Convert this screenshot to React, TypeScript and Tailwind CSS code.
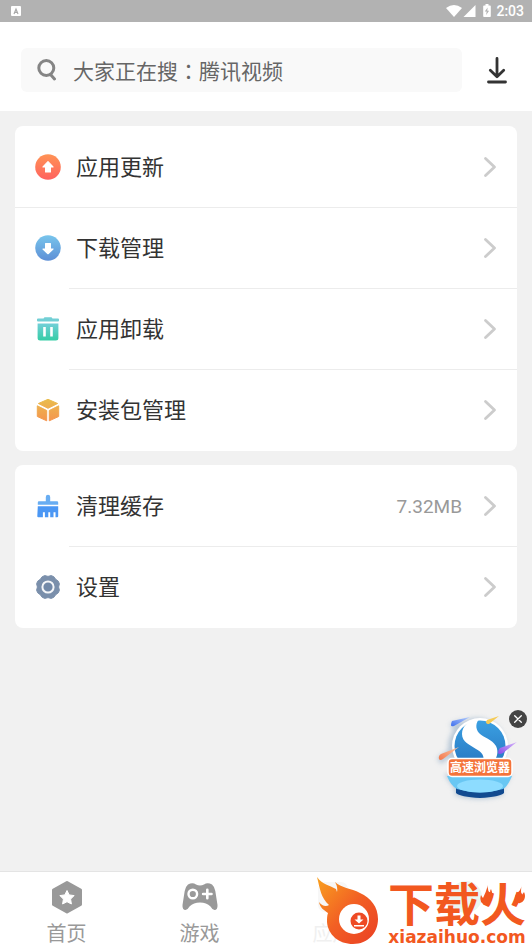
import type { ReactNode } from "react";

type Row = {
    id: string;
    label: string;
    icon: ReactNode;
    value?: string;
    fullDivider?: boolean;
};

function UpdateIcon() {
    return (
        <svg width="26" height="26" viewBox="0 0 26 26">
            <defs>
                <linearGradient id="update" x1="0" y1="0" x2="0" y2="1">
                    <stop offset="0" stopColor="#ff9355" />
                    <stop offset="1" stopColor="#ff6260" />
                </linearGradient>
            </defs>
            <circle cx="13" cy="13" r="12.8" fill="url(#update)" />
            <path
                d="M13 7.7l5 5.3h-2.600v5h-4.800v-5H8z"
                fill="#fff"
                stroke="#fff"
                strokeWidth="1.2"
                strokeLinejoin="round"
            />
        </svg>
    );
}

function DownloadIcon() {
    return (
        <svg width="26" height="26" viewBox="0 0 26 26">
            <defs>
                <linearGradient id="download" x1="0" y1="0" x2="0" y2="1">
                    <stop offset="0" stopColor="#78c5ec" />
                    <stop offset="1" stopColor="#5e8fd6" />
                </linearGradient>
            </defs>
            <circle cx="13" cy="13" r="12.8" fill="url(#download)" />
            <path
                d="M13 18.700l5-4.700h-2.600V8.500h-4.800V14H8z"
                fill="#fff"
                stroke="#fff"
                strokeWidth="1.2"
                strokeLinejoin="round"
            />
        </svg>
    );
}

function TrashIcon() {
    return (
        <svg width="26" height="26" viewBox="0 0 26 26">
            <defs>
                <linearGradient id="trash" x1="0" y1="0" x2="0" y2="1">
                    <stop offset="0" stopColor="#72cfd8" />
                    <stop offset="1" stopColor="#35cda5" />
                </linearGradient>
            </defs>
            <path
                d="M3 2.600h5.500L9.500 1.200h7l1 1.400H23q1 0 1 1v1q0 1-1 1H3q-1 0-1-1v-1q0-1 1-1z"
                fill="#72cfd5"
            />
            <path
                fillRule="evenodd"
                d="M2.600 7.500h20.800V22q0 2.500-2.500 2.500H5.100Q2.600 24.500 2.600 22zM8.200 11v9.600h2.600V11zM15.200 11v9.600h2.600V11z"
                fill="url(#trash)"
            />
        </svg>
    );
}

function PackageIcon() {
    return (
        <svg width="26" height="26" viewBox="0 0 26 26">
            <defs>
                <linearGradient
                    id="box"
                    gradientUnits="userSpaceOnUse"
                    x1="0"
                    y1="2"
                    x2="0"
                    y2="24"
                >
                    <stop offset="0" stopColor="#e9bd4e" />
                    <stop offset="1" stopColor="#f5954f" />
                </linearGradient>
            </defs>
            <g
                fill="url(#box)"
                stroke="url(#box)"
                strokeWidth="1"
                strokeLinejoin="round"
            >
                <path d="M13 2.300l9.600 4.200L13 11.300 3.400 6.500z" />
                <path d="M2.300 8.800l9.400 4.700v10.300l-9.400-4.300z" />
                <path d="M23.700 8.800l-9.400 4.700v10.300l9.400-4.300z" />
            </g>
        </svg>
    );
}

function BrushIcon() {
    return (
        <svg width="26" height="26" viewBox="0 0 26 26">
            <path
                d="M10.800 8.300V4q0-2.200 2.200-2.200T15.200 4v4.300H22q1.200 0 1.200 1.200v2.300H2.800V9.500q0-1.200 1.200-1.200z"
                fill="#68adf2"
            />
            <path
                d="M2.800 13.300h20.400v9.900q0 1-1 1h-1.700v-4.900h-2v4.900h-3.300v-4.900h-1.900v4.900H9.900v-4.900h-2v4.900H3.300q-1 0-1-1z"
                fill="#4b97f4"
            />
        </svg>
    );
}

function GearIcon() {
    return (
        <svg width="26" height="26" viewBox="0 0 26 26">
            <path
                d="M13 2.400L16.200 1.600 18.800 2.700 20.700 5.300 23.300 7.200 24.400 9.800 23.600 13 24.400 16.200 23.300 18.800 20.700 20.700 18.800 23.300 16.200 24.400 13 23.600 9.800 24.400 7.200 23.300 5.300 20.700 2.700 18.800 1.600 16.200 2.400 13 1.600 9.800 2.700 7.200 5.300 5.300 7.200 2.700 9.800 1.600z"
                fill="#7a8fab"
                stroke="#7a8fab"
                strokeWidth="1"
                strokeLinejoin="round"
            />
            <circle
                cx="13"
                cy="13"
                r="5.600"
                fill="#7289a8"
                stroke="#f4f6f9"
                strokeWidth="2"
            />
        </svg>
    );
}

const GROUPS: Row[][] = [
    [
        { id: "update", label: "应用更新", icon: <UpdateIcon />, fullDivider: true },
        { id: "download", label: "下载管理", icon: <DownloadIcon /> },
        { id: "uninstall", label: "应用卸载", icon: <TrashIcon /> },
        { id: "package", label: "安装包管理", icon: <PackageIcon /> },
    ],
    [
        { id: "cache", label: "清理缓存", icon: <BrushIcon />, value: "7.32MB" },
        { id: "settings", label: "设置", icon: <GearIcon /> },
    ],
];

function StatusBar() {
    return (
        <div className="flex h-[22px] items-center justify-between bg-[#b2b2b2] pr-2 pl-[11px]">
            <svg width="10" height="10" viewBox="0 0 10 10">
                <rect width="10" height="10" rx="1" fill="#fff" />
                <path
                    d="M3 8l2-5 2 5M3.700 6.300h2.600"
                    fill="none"
                    stroke="#aaa"
                    strokeWidth="1.200"
                />
            </svg>
            <div className="flex items-center">
                <svg width="46" height="14" viewBox="0 0 46 14" fill="#fff">
                    <path d="M0 4Q8-2 16 4L8 13z" />
                    <path d="M29.500 1v12H17.500z" />
                    <path
                        fillRule="evenodd"
                        d="M38 1.500h1.500V0h3v1.500H44q.8 0 .8.800v9.900q0 .8-.8.800h-6q-.8 0-.8-.800V2.300q0-.8.800-.800zM41.600 3.500L38.800 7.500h1.900L40.100 11l3-4.300h-1.800z"
                    />
                </svg>
                <span className="ml-1 font-[Roboto,sans-serif] text-sm leading-none font-medium text-white">
                    2:03
                </span>
            </div>
        </div>
    );
}

function SearchHeader() {
    return (
        <header className="flex items-center bg-white pt-[26px] pr-6 pb-[19px] pl-[21px]">
            <label className="flex h-11 min-w-0 flex-1 items-center rounded-md bg-[#f9f9f9] pl-4">
                <svg
                    width="20"
                    height="22"
                    viewBox="0 0 20 22"
                    fill="none"
                    stroke="#858585"
                    strokeWidth="3"
                    strokeLinecap="round"
                >
                    <circle cx="9.300" cy="9" r="7.500" />
                    <path d="M13.500 15.500l4 4.500" />
                </svg>
                <input
                    type="text"
                    aria-label="搜索"
                    placeholder="大家正在搜：腾讯视频"
                    className="ml-4 h-full min-w-0 flex-1 bg-transparent font-['Noto_Sans_CJK_TC',sans-serif] text-[21px] outline-none placeholder:text-[#666]"
                />
            </label>
            <button type="button" aria-label="下载" className="ml-6">
                <svg
                    width="22"
                    height="28"
                    viewBox="0 0 22 28"
                    fill="none"
                    stroke="#333"
                    strokeWidth="2.800"
                    strokeLinecap="round"
                    strokeLinejoin="round"
                >
                    <path d="M11 2.500v18M4.300 14.200l6.700 6.500 6.700-6.500" />
                    <path d="M2.500 26h17" />
                </svg>
            </button>
        </header>
    );
}

function MenuRow({ row, last }: { row: Row; last: boolean }) {
    return (
        <li>
            <button
                type="button"
                className="flex h-20 w-full items-center px-5 text-left"
            >
                {row.icon}
                <span className="ml-[15px] flex-1 pt-0.5 text-[22px] leading-8 text-[#333]">
                    {row.label}
                </span>
                {row.value && (
                    <span className="mr-5 pt-0.5 text-[19px] text-[#999]">
                        {row.value}
                    </span>
                )}
                <svg
                    width="15"
                    height="22"
                    viewBox="0 0 15 22"
                    fill="none"
                    stroke="#ccc"
                    strokeWidth="2.800"
                    strokeLinecap="round"
                    strokeLinejoin="round"
                >
                    <path d="M3.500 2.500L12.500 11l-9 8.500" />
                </svg>
            </button>
            {!last && (
                <div
                    className={`h-px bg-[#ececec] ${row.fullDivider ? "" : "ml-[54px]"}`}
                />
            )}
        </li>
    );
}

function FloatingAd() {
    return (
        <div className="absolute right-0 bottom-[136px]">
            <a href="#browser" aria-label="高速浏览器">
                <svg width="110" height="110" viewBox="0 0 110 110">
                    <defs>
                        <linearGradient id="ball" x1="0" y1="0" x2="0" y2="1">
                            <stop offset="0" stopColor="#3aa0e2" />
                            <stop offset="1" stopColor="#2672bd" />
                        </linearGradient>
                        <linearGradient id="orange" x1="1" y1="0" x2="0" y2="1">
                            <stop offset="0" stopColor="#f9c9a8" />
                            <stop offset="1" stopColor="#f4764a" />
                        </linearGradient>
                        <linearGradient id="purple" x1="1" y1="0" x2="0" y2="1">
                            <stop offset="0" stopColor="#d9b8fa" />
                            <stop offset="1" stopColor="#8449ea" />
                        </linearGradient>
                        <linearGradient id="blue" x1="1" y1="0" x2="0" y2="1">
                            <stop offset="0" stopColor="#b5cdfc" />
                            <stop offset="1" stopColor="#3f70ee" />
                        </linearGradient>
                        <filter id="soft" x="-30%" y="-30%" width="160%" height="160%">
                            <feGaussianBlur stdDeviation="2.500" />
                        </filter>
                    </defs>
                    <g fill="#a9bdd0" opacity=".8" filter="url(#soft)">
                        <path d="M22 74h68l-9 15v6q-24 8-48 0v-6z" />
                        <circle cx="55" cy="47" r="29" />
                        <path d="M15 58l15-10 3 5-14 11z" />
                        <path d="M28 24l12-5-8 12z" />
                    </g>
                    <circle cx="58" cy="46" r="28" fill="#fff" />
                    <circle cx="58" cy="46" r="25.500" fill="url(#ball)" />
                    <path
                        d="M55 19C47 20 40 26 40 34c0 8 8 11 14 15 6 3 9 7 7 14h9c5-4 7-11 4-17-4-7-12-8-17-13-4-5-3-10 0-14z"
                        fill="#fff"
                    />
                    <path d="M30 21l18-4-16 9q-3 1-3-1 0-2 1-4z" fill="url(#blue)" />
                    <path d="M65 20l12-4-10 8q-3 0-3-2z" fill="#f5cb56" />
                    <path d="M78 48l17-6-14 11q-4 2-5 0 0-3 2-5z" fill="url(#purple)" />
                    <path d="M19 54l18-7-16 12q-3 2-4 0-1-3 2-5z" fill="url(#orange)" />
                    <path d="M34 87q24 10 48 0v6q-4 4-24 5-20-1-24-5z" fill="#114a90" />
                    <path d="M25 76h65q-4 10-9 13-23 7-46 0-6-3-10-13z" fill="#69c7f3" />
                    <ellipse cx="58" cy="86" rx="23" ry="6.500" fill="#8ddcff" />
                    <rect
                        x="26"
                        y="58.500"
                        width="64"
                        height="18"
                        rx="4"
                        fill="#f4733a"
                        stroke="#fff"
                        strokeWidth="1.500"
                    />
                    <text
                        x="58"
                        y="72"
                        textAnchor="middle"
                        fill="#fff"
                        className="font-['Noto_Sans_CJK_SC',sans-serif] text-[12px] font-bold"
                    >
                        高速浏览器
                    </text>
                </svg>
            </a>
            <button
                type="button"
                aria-label="关闭"
                className="absolute top-[10px] right-[5px] flex size-[18px] items-center justify-center rounded-full bg-[#444]"
            >
                <svg
                    width="8"
                    height="8"
                    viewBox="0 0 8 8"
                    stroke="#fff"
                    strokeWidth="1.300"
                    strokeLinecap="round"
                >
                    <path d="M.7.7l6.600 6.600M7.300.7L.7 7.300" />
                </svg>
            </button>
        </div>
    );
}

function TabBar() {
    return (
        <nav className="grid h-[75px] grid-cols-4 border-t border-[#e4e4e4] bg-white pt-2 text-xl leading-7 text-[#999]">
            <a href="#home" className="flex flex-col items-center gap-1.5">
                <svg width="36" height="34" viewBox="0 0 36 34">
                    <path
                        d="M18 2.500l13.500 7.500v14.500L18 32 4.500 24.500V10z"
                        fill="#999"
                        stroke="#999"
                        strokeWidth="3"
                        strokeLinejoin="round"
                    />
                    <path
                        d="M18 10.500l2.200 4.400 4.900.7-3.500 3.500.8 4.900-4.400-2.300-4.400 2.300.8-4.900-3.500-3.500 4.900-.7z"
                        fill="#fff"
                        stroke="#fff"
                        strokeLinejoin="round"
                    />
                </svg>
                首页
            </a>
            <a href="#games" className="flex flex-col items-center gap-1.5">
                <svg width="36" height="34" viewBox="0 0 36 34">
                    <path
                        d="M6 4.500Q10.500 2 14 4.500q4 2 8 0Q25.500 2 30 4.500q2.500 2 3.300 6.500l2.200 14q.3 5-3 5-2 0-4-3.500Q24.500 22.500 18 22.500T7.500 26.500q-2 3.500-4 3.500-3.300 0-3-5l2.200-14Q3.500 6.500 6 4.500z"
                        fill="#999"
                    />
                    <circle
                        cx="10.800"
                        cy="14"
                        r="4.300"
                        fill="none"
                        stroke="#fff"
                        strokeWidth="2.400"
                    />
                    <path
                        d="M25.300 9.800v8.400M21.100 14h8.400"
                        stroke="#fff"
                        strokeWidth="2.600"
                        strokeLinecap="round"
                    />
                </svg>
                游戏
            </a>
            <a
                href="#apps"
                className="flex flex-col items-center gap-1.5 text-[#f0f0f0]"
            >
                <svg width="36" height="34" viewBox="0 0 36 34">
                    <rect x="3" y="2" width="30" height="30" rx="7" fill="#f7f7f7" />
                </svg>
                应用
            </a>
            <a
                href="#manage"
                aria-label="管理"
                className="flex flex-col items-center"
            >
                <svg width="36" height="34" viewBox="0 0 36 34">
                    <circle cx="18" cy="17" r="16" fill="#e9f7f2" />
                </svg>
            </a>
        </nav>
    );
}

function SiteBadge() {
    return (
        <div className="pointer-events-none absolute right-[6px] bottom-0 flex items-end gap-2 text-[#f2581f]">
            <svg width="64" height="72" viewBox="0 0 64 72">
                <defs>
                    <linearGradient id="flame" x1="0" y1="0" x2="1" y2="1">
                        <stop offset="0" stopColor="#f9a11f" />
                        <stop offset=".5" stopColor="#f26024" />
                        <stop offset="1" stopColor="#ea3f24" />
                    </linearGradient>
                </defs>
                <path
                    d="M1 3c6 8 12 8 19 12l1 3q1-5-2-10c6 6 16 6 25 11 11 5 18 14 18 26 0 14-10 25-25 25-14 0-25-9-26-22 0-4 0-6 1-9-4-3-8-5-9-11 3 4 7 5 10 3C5 24 4 15 1 3z"
                    fill="url(#flame)"
                />
                <circle cx="38" cy="45" r="15" fill="#fff" />
                <circle cx="43" cy="47" r="8.500" fill="#ee4a24" />
                <path
                    d="M41.500 41.500h3v4h3L43 49.500l-4.500-4h3zM38 51h10v1.600H38z"
                    fill="#fff"
                />
            </svg>
            <div className="relative flex flex-col items-center gap-1">
                <span className="font-['Noto_Sans_CJK_SC',sans-serif] text-[46px] leading-[46px] font-bold">
                    下载火
                </span>
                <svg
                    width="46"
                    height="24"
                    viewBox="0 0 46 24"
                    fill="currentColor"
                    className="absolute top-1.5 right-0"
                >
                    <path d="M8 1q-1 5 2 8 0-3 1-4 3 7 0 12-3 5-8 3-4-3-2-9 1 2 2 3 3-6 5-13z" />
                    <path d="M42 1q-1 5-5 8-4 4-1 9 5 3 8-2 2-4 0-8l-2 3q-2-4 0-10z" />
                </svg>
                <span className="font-['DejaVu_Sans',sans-serif] text-[17px] leading-[18px] font-bold">
                    xiazaihuo.com
                </span>
            </div>
        </div>
    );
}

export default function App() {
    return (
        <div className="relative flex min-h-screen flex-col bg-[#f1f1f1] font-[Roboto,'Noto_Sans_CJK_SC',sans-serif]">
            <StatusBar />
            <SearchHeader />
            <main className="flex flex-1 flex-col gap-[14px] p-[15px]">
                {GROUPS.map((rows) => (
                    <ul key={rows[0].id} className="rounded-lg bg-white py-px">
                        {rows.map((row, i) => (
                            <MenuRow
                                key={row.id}
                                row={row}
                                last={i === rows.length - 1}
                            />
                        ))}
                    </ul>
                ))}
            </main>
            <TabBar />
            <FloatingAd />
            <SiteBadge />
        </div>
    );
}
